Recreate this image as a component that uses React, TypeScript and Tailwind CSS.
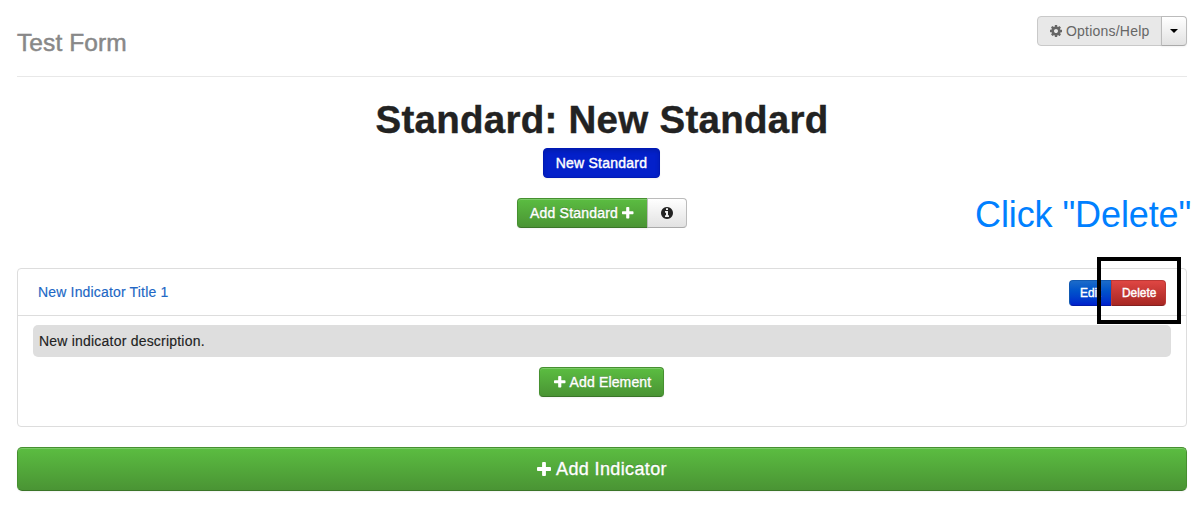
import React from "react";

type IconProps = { className?: string };

function Plus({ className = "" }: IconProps) {
  return (
    <svg viewBox="0 192 1408 1408" fill="currentColor" className={className} aria-hidden="true">
      <path d="M1408 800v192q0 40-28 68t-68 28h-416v416q0 40-28 68t-68 28h-192q-40 0-68-28t-28-68v-416h-416q-40 0-68-28t-28-68v-192q0-40 28-68t68-28h416v-416q0-40 28-68t68-28h192q40 0 68 28t28 68v416h416q40 0 68 28t28 68z" />
    </svg>
  );
}

function Cog({ className = "" }: IconProps) {
  return (
    <svg viewBox="0 128 1536 1536" fill="currentColor" className={className} aria-hidden="true">
      <path d="M1024 896q0-106-75-181t-181-75-181 75-75 181 75 181 181 75 181-75 75-181zm512-109v222q0 12-8 23t-20 13l-185 28q-19 54-39 91 35 50 107 138 10 12 10 25t-9 23q-27 37-99 108t-94 71q-12 0-26-9l-138-108q-44 23-91 38-16 136-29 186-7 28-36 28h-222q-14 0-24.5-8.5t-11.5-21.5l-28-184q-49-16-90-37l-141 107q-10 9-25 9-14 0-25-11-126-114-165-168-7-10-7-23 0-12 8-23 15-21 51-66.5t54-70.5q-27-50-41-99l-183-27q-13-2-21-12.5t-8-23.5v-222q0-12 8-23t19-13l186-28q14-46 39-92-40-57-107-138-10-12-10-24 0-10 9-23 26-36 98.5-107.5t94.5-71.5q13 0 26 10l138 107q44-23 91-38 16-136 29-186 7-28 36-28h222q14 0 24.5 8.5t11.5 21.5l28 184q49 16 90 37l142-107q9-9 24-9 13 0 25 10 129 119 165 170 7 8 7 22 0 12-8 23-15 21-51 66.5t-54 70.5q26 50 41 98l183 28q13 2 21 12.5t8 23.5z" />
    </svg>
  );
}

function Info({ className = "" }: IconProps) {
  return (
    <svg viewBox="128 128 1536 1536" fill="currentColor" className={className} aria-hidden="true">
      <path d="M1152 1376v-160q0-14-9-23t-23-9h-96v-512q0-14-9-23t-23-9h-320q-14 0-23 9t-9 23v160q0 14 9 23t23 9h96v320h-96q-14 0-23 9t-9 23v160q0 14 9 23t23 9h448q14 0 23-9t9-23zm-128-896v-160q0-14-9-23t-23-9h-192q-14 0-23 9t-9 23v160q0 14 9 23t23 9h192q14 0 23-9t9-23zm640 416q0 209-103 385.5t-279.5 279.5-385.5 103-385.5-103-279.5-279.5-103-385.5 103-385.5 279.5-279.5 385.5-103 385.5 103 279.5 279.5 103 385.5z" />
    </svg>
  );
}

const green =
  "flex items-center border border-[#469030] border-b-[#3a7528] bg-linear-to-b from-[#5bbd41] to-[#4a9434] text-white shadow-[inset_0_1px_0_rgba(255,255,255,0.2),0_1px_2px_rgba(0,0,0,0.05)] [text-shadow:0_-1px_0_rgba(0,0,0,0.25)] [-webkit-text-stroke:0.35px_white]";

export default function App() {
  return (
    <div className="relative h-[525px] w-[1202px] overflow-hidden bg-white px-[17px] pr-[15px] font-['Liberation_Sans',Arial,sans-serif] text-sm leading-5 text-[#222]">
      <header className="flex h-[77px] items-start justify-between border-b border-[#e8e8e8] pt-4">
        <h1 className="pt-[7px] text-[24.5px] leading-10 tracking-[0.1px] text-[#888] [-webkit-text-stroke:0.5px_#888]">Test Form</h1>
        <div className="flex h-[30px]">
          <button className="flex w-[125px] items-center rounded-l border border-[#c9c9c9] bg-[#e8e8e8] pl-3 text-[#666]">
            <Cog className="mr-1 mb-px size-3" />
            <span className="tracking-[0.21px]">Options/Help</span>
          </button>
          <button className="-ml-px flex w-[26px] items-center justify-center rounded-r border border-[#bbb] border-b-[#aaa] bg-linear-to-b from-white to-[#e2e2e2] shadow-[0_1px_2px_rgba(0,0,0,0.05)]">
            <span className="border-x-4 border-t-4 border-x-transparent border-t-black" />
          </button>
        </div>
      </header>

      <section className="flex flex-col items-center">
        <h2 className="mt-[23px] text-[38.5px] leading-10 font-bold tracking-[0.27px] whitespace-nowrap [-webkit-text-stroke:0.4px_#222]">Standard: New Standard</h2>
        <button className="mt-2 mr-px h-[30px] w-[117px] rounded border border-[#0019b5] bg-[#0320ca] tracking-[0.24px] text-white shadow-[inset_0_2px_4px_rgba(0,0,0,0.15),0_1px_2px_rgba(0,0,0,0.05)] [-webkit-text-stroke:0.4px_white]">
          New Standard
        </button>
        <div className="mt-5 flex h-[30px]">
          <button className={`${green} w-[131px] rounded-l pl-3`}>
            <span className="tracking-[0.2px]">Add Standard</span>
            <Plus className="ml-1 size-[11.5px]" />
          </button>
          <button className="-ml-px flex w-10 items-center justify-center rounded-r border border-[#bbb] border-b-[#aaa] bg-linear-to-b from-white to-[#e2e2e2]">
            <Info className="size-3" />
          </button>
        </div>
      </section>

      <section className="mt-10 h-[159px] rounded border border-[#ddd]">
        <div className="flex h-[47px] items-center justify-between border-b border-[#ddd] pr-5 pl-5">
          <a className="tracking-[0.17px] text-[#2167c5] [-webkit-text-stroke:0.15px_#2167c5]">New Indicator Title 1</a>
          <div className="mt-[2px] flex h-[26px] text-[11.9px] text-white [-webkit-text-stroke:0.4px_white] [text-shadow:0_-1px_0_rgba(0,0,0,0.25)]">
            <button className="w-[42px] rounded-l border border-r-0 border-[#1159b2] border-b-[#001ba8] bg-linear-to-b from-[#1b6bc9] to-[#0320cc] pl-[10px] text-left">Edit</button>
            <button className="w-[55px] rounded-r border border-[#bc3835] border-b-[#842020] bg-linear-to-b from-[#df4643] to-[#a82723] pl-[10px] text-left">Delete</button>
          </div>
        </div>
        <div className="mx-[15px] mt-[9px] flex h-8 items-center rounded-[5px] bg-[#dedede] px-[6px] tracking-[0.21px] [-webkit-text-stroke:0.15px_#222]">New indicator description.</div>
        <button className={`${green} mt-[10px] ml-[521px] h-[30px] w-[125px] rounded pl-[14px]`}>
          <Plus className="mr-1 size-[11.5px]" />
          <span className="tracking-[0.15px]">Add Element</span>
        </button>
      </section>

      <button className={`${green} mt-5 h-11 w-full justify-center rounded-[5px] text-[17.5px]`}>
        <Plus className="mr-[5px] mb-px size-[14px]" />
        <span className="text-[18px] tracking-[0.37px]">Add Indicator</span>
      </button>

      <div className="absolute top-[194px] left-[975px] text-[36px] leading-[42px] tracking-[-0.1px] whitespace-nowrap text-[#0080ff]">Click "Delete"</div>
      <div className="absolute top-[257px] left-[1097px] h-[67px] w-[84px] border-4 border-black" />
    </div>
  );
}
